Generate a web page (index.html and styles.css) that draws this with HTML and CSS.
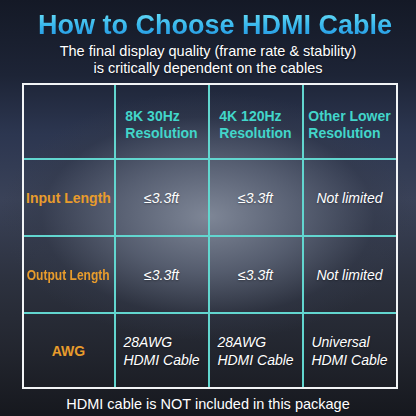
FILE: index.html
```html
<!DOCTYPE html>
<html lang="en">
<head>
  <meta charset="UTF-8">
  <title>How to Choose HDMI Cable</title>
  <link rel="stylesheet" href="styles.css">
</head>
<body>

  <div class="page">
    <h1 class="title">How to Choose HDMI Cable</h1>
    <p class="subtitle">The final display quality (frame rate &amp; stability)<br>is critically dependent on the cables</p>

    <!-- Comparison table -->
    <div class="table">
      <div class="cell"></div>
      <div class="cell head"><div>8K 30Hz<br>Resolution</div></div>
      <div class="cell head"><div>4K 120Hz<br>Resolution</div></div>
      <div class="cell head last-col"><div>Other Lower<br>Resolution</div></div>

      <div class="cell label">Input Length</div>
      <div class="cell value">≤3.3ft</div>
      <div class="cell value">≤3.3ft</div>
      <div class="cell value last-col">Not limited</div>

      <div class="cell label"><span class="squeeze">Output Length</span></div>
      <div class="cell value">≤3.3ft</div>
      <div class="cell value">≤3.3ft</div>
      <div class="cell value last-col">Not limited</div>

      <div class="cell label last-row">AWG</div>
      <div class="cell value block last-row"><div>28AWG<br>HDMI Cable</div></div>
      <div class="cell value block last-row"><div>28AWG<br>HDMI Cable</div></div>
      <div class="cell value block last-row last-col"><div>Universal<br>HDMI Cable</div></div>
    </div>

    <p class="note">HDMI cable is NOT included in this package</p>
  </div>

</body>
</html>
```

FILE: styles.css
```css
html, body {
  margin: 0;
  padding: 0;
}

body {
  width: 416px;
  height: 416px;
  overflow: hidden;
  font-family: "Liberation Sans", Arial, sans-serif;
  color: #fff;
  background:
    radial-gradient(ellipse 50% 30% at 50% 52%, rgba(130,138,154,0.95) 0%, rgba(94,102,120,0.8) 45%, rgba(52,58,74,0.4) 80%, rgba(30,34,46,0) 100%),
    linear-gradient(#141926 0%, #1d2436 18%, #2c3650 32%, #3a4258 48%, #2c313e 68%, #22252e 85%, #16181e 100%);
}

.page {
  display: flex;
  flex-direction: column;
  align-items: center;
}

.title {
  margin: 10px 0 0 14px;
  font-size: 27px;
  line-height: 30px;
  font-weight: bold;
  background: linear-gradient(#6ee2f8, #35b4ec 55%, #2592e0);
  -webkit-background-clip: text;
  background-clip: text;
  color: transparent;
}

.subtitle {
  margin: 2.5px 0 0;
  font-size: 14.5px;
  line-height: 17px;
  text-align: center;
  text-shadow: 0 1px 2px rgba(0,0,0,0.5);
}

.table {
  display: grid;
  grid-template-columns: 92px 94px 94px 92px;
  grid-template-rows: 75px 77px 77px 73px;
  margin: 6.5px 0 0 3px;
  border: 2px solid #f2f4f6;
  font-size: 14px;
}

.cell {
  display: flex;
  align-items: center;
  justify-content: center;
  border-right: 2px solid #62d6cf;
  border-bottom: 2px solid #62d6cf;
  text-align: center;
}

.cell.last-col {
  border-right: none;
}

.cell.last-row {
  border-bottom: none;
}

.head {
  padding-top: 7px;
  color: #42d6ca;
  font-weight: bold;
  line-height: 17px;
  text-align: left;
}

.head div,
.block div {
  text-align: left;
}

.label {
  color: #e89c2c;
  font-weight: bold;
  white-space: nowrap;
}

.squeeze {
  display: inline-block;
  transform: scaleX(0.86);
}

.value {
  font-style: italic;
  text-shadow: 0 1px 2px rgba(0,0,0,0.35);
}

.block {
  line-height: 18px;
}

.note {
  margin: 6.5px 0 0;
  font-size: 14.5px;
  line-height: 17px;
}
```
